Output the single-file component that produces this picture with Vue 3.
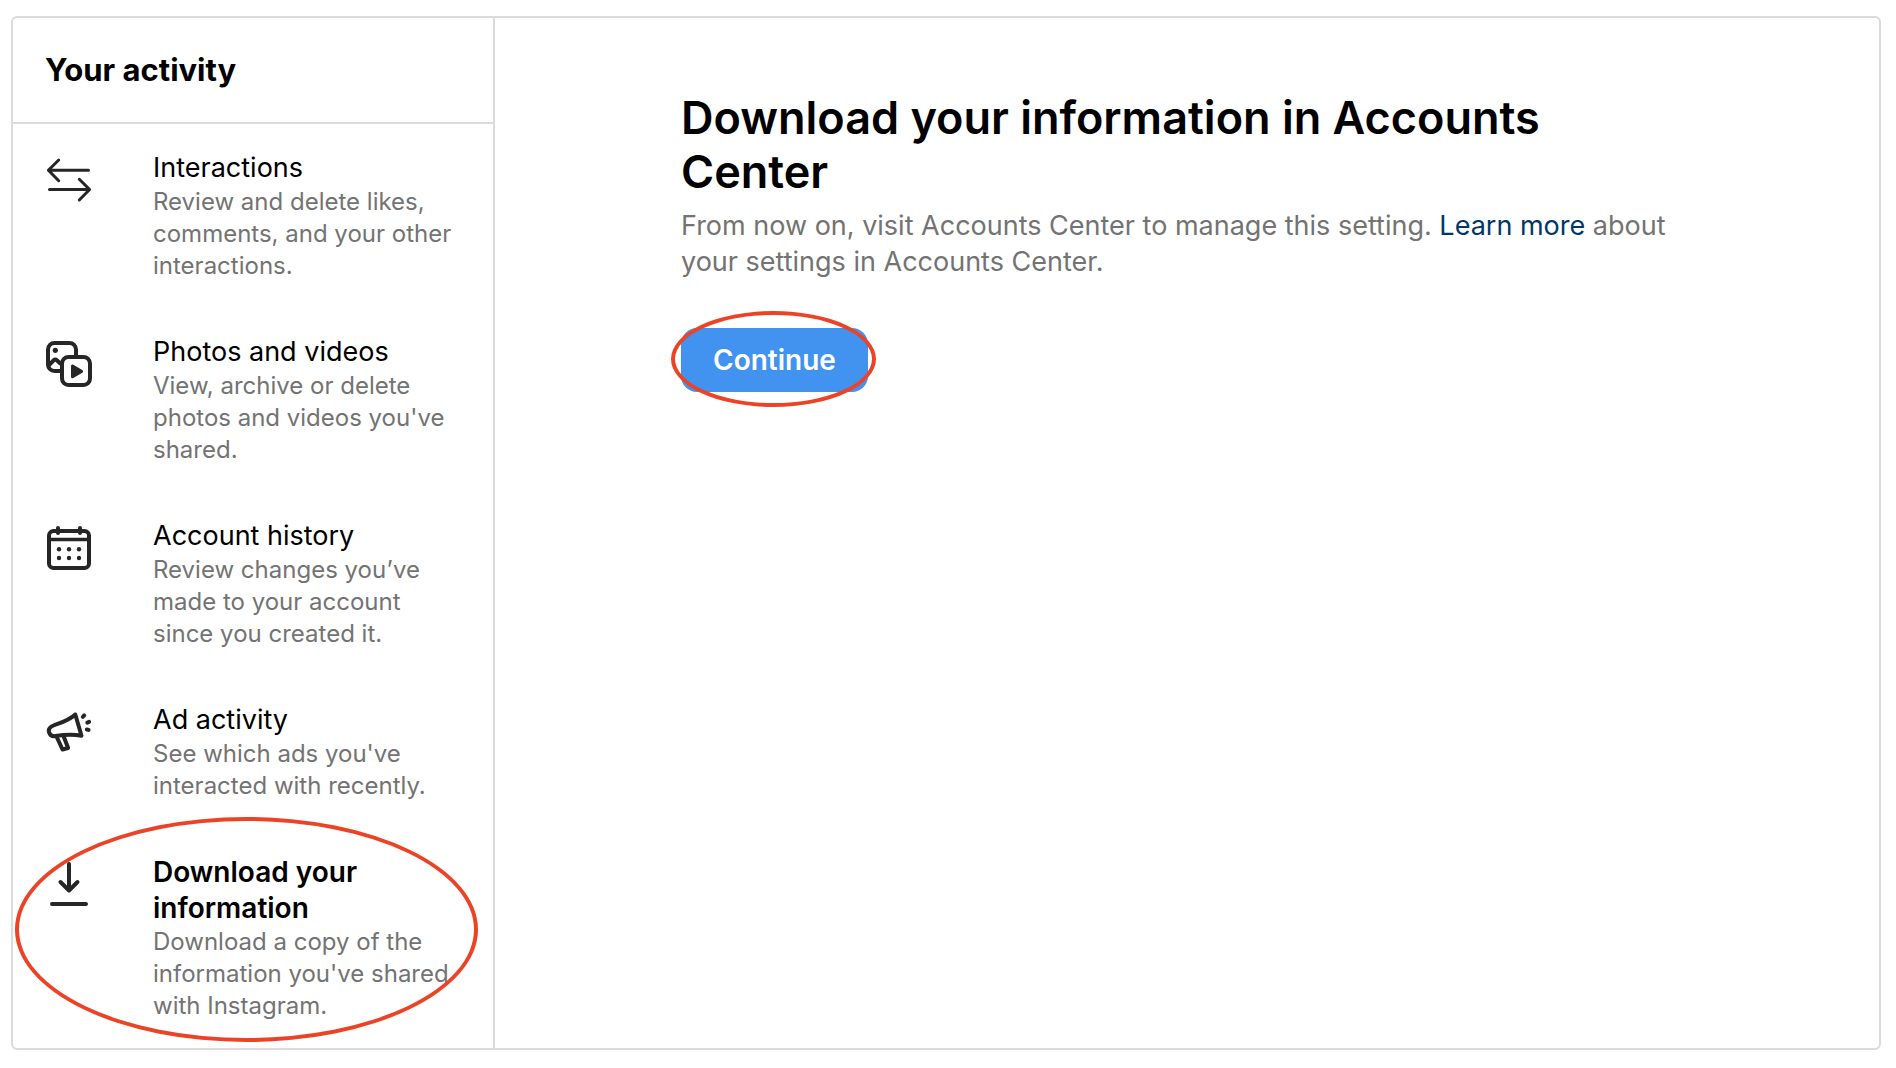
<script setup>
const items = [
  {
    id: 'interactions',
    title: 'Interactions',
    text: 'Review and delete likes, comments, and your other interactions.',
  },
  {
    id: 'media',
    title: 'Photos and videos',
    text: "View, archive or delete photos and videos you've shared.",
  },
  {
    id: 'history',
    title: 'Account history',
    text: 'Review changes you’ve made to your account since you created it.',
  },
  {
    id: 'ads',
    title: 'Ad activity',
    text: "See which ads you've interacted with recently.",
  },
  {
    id: 'download',
    title: 'Download your information',
    text: "Download a copy of the information you've shared with Instagram.",
    active: true,
  },
]
</script>

<template>
  <div class="card">
    <aside class="sidebar">
      <h2 class="sidebar-title">Your activity</h2>
      <nav>
        <ul class="list">
          <li v-for="item in items" :key="item.id" class="entry" :class="{ circled: item.active }">
            <a class="item" :class="{ active: item.active }" :href="'#' + item.id">
              <svg class="icon" viewBox="0 0 48 48" aria-hidden="true">
                <g v-if="item.id === 'interactions'" stroke-width="3">
                  <path d="M43.500 14.300H3.500M13.700 4 3.400 14.300 13.700 24.700" />
                  <path d="M4.500 33.500h40M34.300 23.300 44.600 33.500 34.300 44" />
                </g>
                <g v-else-if="item.id === 'media'" stroke-width="4">
                  <path d="M15 31H9.500A6.500 6.500 0 0 1 3 24.500v-15A6.500 6.500 0 0 1 9.500 3h15A6.500 6.500 0 0 1 31 9.500V15" />
                  <path d="M3.500 25.500 9 20a1.800 1.800 0 0 1 2.600 0L15 23.300" />
                  <circle class="solid" cx="10.300" cy="10.300" r="2.600" />
                  <rect x="17" y="17" width="28" height="28" rx="6.500" />
                  <path class="solid" d="M26 26v10.800a1.500 1.500 0 0 0 2.300 1.300l9-5.400a1.500 1.500 0 0 0 0-2.600l-9-5.400A1.500 1.500 0 0 0 26 26Z" />
                </g>
                <g v-else-if="item.id === 'history'" stroke-width="4">
                  <rect x="4" y="7" width="40" height="37" rx="4.500" />
                  <path d="M4 15.500h40" stroke-width="3.500" />
                  <path d="M13 4v5M35 4v5" />
                  <g class="solid">
                    <circle cx="14" cy="25.300" r="2.200" />
                    <circle cx="24" cy="25.300" r="2.200" />
                    <circle cx="34" cy="25.300" r="2.200" />
                    <circle cx="14" cy="34" r="2.200" />
                    <circle cx="24" cy="34" r="2.200" />
                    <circle cx="34" cy="34" r="2.200" />
                  </g>
                </g>
                <g v-else-if="item.id === 'ads'" stroke-width="4">
                  <path d="M30.300 6.500C24 12.500 15 15 8.500 17.500c-4 1.600-5.300 4.500-4.300 7.300 1 2.600 3.300 3.800 6.300 3.200 8-1.300 17-2 26-.3Z" />
                  <path d="M11.500 28.500 17.500 41.500l5.600-1.500-4.600-12" />
                  <path d="m37.800 8.800 1.400-1.400M42.300 14.600l1.800-.7M41.800 21.500l1.800.4" />
                </g>
                <g v-else stroke-width="4">
                  <path d="M24 4v26M15.500 22l8.500 8.500 8.500-8.500M7 44h34" />
                </g>
              </svg>
              <span class="copy">
                <span class="title">{{ item.title }}</span>
                <span class="text">{{ item.text }}</span>
              </span>
            </a>
          </li>
        </ul>
      </nav>
    </aside>

    <main class="main">
      <h1 class="heading">Download your information in Accounts Center</h1>
      <p class="lead">
        From now on, visit Accounts Center to manage this setting.
        <a class="link" href="#learn-more">Learn more</a> about your settings in Accounts Center.
      </p>
      <div class="action circled">
        <button class="continue" type="button">Continue</button>
      </div>
    </main>
  </div>
</template>

<style>
body {
  margin: 0;
  background: #fff;
}
</style>

<style scoped>
.card {
  display: flex;
  margin: 16px 15px 16px 11px;
  border: 2px solid #dbdbdb;
  border-radius: 6px;
  font-family: Inter, "Liberation Sans", sans-serif;
  color: #000;
}

.sidebar {
  flex: 0 0 480px;
  border-right: 2px solid #dbdbdb;
}

.sidebar-title {
  margin: 0;
  padding: 32px;
  border-bottom: 2px solid #dbdbdb;
  font-size: 31px;
  line-height: 40px;
  font-weight: 700;
}

.list {
  margin: 0;
  padding: 0;
  list-style: none;
}

.item {
  display: flex;
  gap: 60px;
  padding: 26px 32px;
  color: inherit;
  text-decoration: none;
}

.icon {
  flex: none;
  width: 48px;
  height: 48px;
  margin-top: 6px;
  fill: none;
  stroke: #262626;
  stroke-linecap: round;
  stroke-linejoin: round;
}

.solid {
  fill: #262626;
  stroke: none;
}

.copy {
  display: flex;
  flex-direction: column;
}

.title {
  font-size: 27px;
  line-height: 36px;
}

.active .title {
  font-size: 28px;
  font-weight: 600;
}

.text {
  font-size: 24px;
  line-height: 32px;
  color: #737373;
}

.main {
  flex: 1;
  min-width: 0;
  padding: 73px 186px;
}

.heading {
  margin: 0 0 9px;
  font-size: 45px;
  line-height: 54px;
  font-weight: 600;
}

.lead {
  margin: 0 0 48px;
  font-size: 27px;
  line-height: 36px;
  color: #737373;
}

.link {
  color: #00376b;
  text-decoration: none;
}

.continue {
  display: block;
  padding: 14px 32px;
  border: 0;
  border-radius: 16px;
  background: #4193ef;
  color: #fff;
  font: inherit;
  font-size: 28px;
  line-height: 36px;
  font-weight: 600;
}

.action {
  width: fit-content;
}

/* red highlight rings */
.circled {
  position: relative;
}

.circled::after {
  content: "";
  position: absolute;
  inset: -17px -8px -15px -10px;
  border: 4px solid #ec4226;
  border-radius: 50%;
  pointer-events: none;
}

.entry.circled::after {
  inset: -11px 15px 6px 2px;
}
</style>
